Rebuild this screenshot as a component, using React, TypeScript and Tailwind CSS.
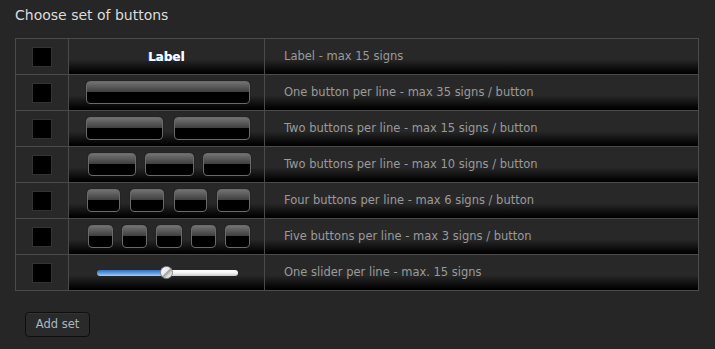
import React from "react";

const rows = [
  { kind: "label", text: "Label - max 15 signs" },
  { kind: "buttons", count: 1, text: "One button per line - max 35 signs / button" },
  { kind: "buttons", count: 2, text: "Two buttons per line - max 15 signs / button" },
  { kind: "buttons", count: 3, text: "Two buttons per line - max 10 signs / button" },
  { kind: "buttons", count: 4, text: "Four buttons per line - max 6 signs / button" },
  { kind: "buttons", count: 5, text: "Five buttons per line - max 3 signs / button" },
  { kind: "slider", text: "One slider per line - max. 15 signs" },
];

const gaps: Record<number, string> = {
  1: "gap-0 pl-[17px] pr-[14px]",
  2: "gap-[11px] pl-[17px] pr-[14px]",
  3: "gap-[9px] pl-[19px] pr-[13px]",
  4: "gap-[10px] pl-[18px] pr-[14px]",
  5: "gap-[9px] pl-[19px] pr-[14px]",
};

const GlossButton = () => (
  <div className="h-[23px] flex-1 rounded-[4px] border border-[#6a6a6a] bg-[linear-gradient(#727272,#3e3e3e_48%,#000_50%,#000)] shadow-[0_0_1px_#000]" />
);

const Slider = () => (
  <div className="relative h-[13px] w-[141px]">
    <div className="absolute left-0 top-[4px] h-[6px] w-[70px] rounded-l-full bg-[linear-gradient(#2e6fc0,#5d9be0_50%,#a8cdf2)]" />
    <div className="absolute right-0 top-[4px] h-[6px] w-[72px] rounded-r-full bg-[linear-gradient(#ffffff,#f2f2f2_50%,#c9c9c9)]" />
    <div className="absolute left-[63px] top-0 h-[13px] w-[13px] rounded-full border border-[#8a8a8a] bg-[linear-gradient(135deg,#ffffff_0%,#e8e8e8_45%,#9a9a9a_52%,#d8d8d8_70%,#f5f5f5)]" />
  </div>
);

export default function App() {
  return (
    <div
      className="min-h-[349px] w-full bg-[#262626] px-[15px] pt-[6px] text-[#999]"
      style={{ fontFamily: '"DejaVu Sans", Verdana, sans-serif' }}
    >
      <h1 className="text-[14px] leading-[18px] text-[#dcdcdc]">Choose set of buttons</h1>
      <div className="mt-[14px] w-[684px] border border-[#4a4a4a]">
        {rows.map((r, i) => (
          <div
            key={i}
            className="flex h-[36px] border-b border-[#4a4a4a] last:h-[35px] last:border-b-0"
          >
            <div className="flex w-[53px] shrink-0 items-center justify-center border-r border-[#4a4a4a] bg-[#282828]">
              <div className="h-[20px] w-[20px] border border-[#333] bg-black" />
            </div>
            <div className="flex w-[196px] shrink-0 items-center border-r border-[#4a4a4a] bg-[linear-gradient(#282828_58%,#000_97%)]">
              {r.kind === "label" && (
                <div className="w-full text-center text-[12px] font-bold text-white [text-shadow:-0.5px_0_0_#6aa0ff]">
                  Label
                </div>
              )}
              {r.kind === "buttons" && (
                <div className={`flex w-full ${gaps[r.count as number]}`}>
                  {Array.from({ length: r.count as number }).map((_, j) => (
                    <GlossButton key={j} />
                  ))}
                </div>
              )}
              {r.kind === "slider" && (
                <div className="flex w-full justify-center pl-[1px]">
                  <Slider />
                </div>
              )}
            </div>
            <div className="flex flex-1 items-center bg-[linear-gradient(#282828_58%,#000_97%)] pl-[19px] text-[11.5px] text-[#9a9a9a]">
              {r.text}
            </div>
          </div>
        ))}
      </div>
      <button className="mt-[21px] ml-[10px] h-[25px] w-[65px] rounded-[4px] border border-[#0e0e0e] bg-[#2a2a2a] text-[11.5px] text-[#a9b6c2] shadow-[inset_0_1px_0_#333]">
        Add set
      </button>
    </div>
  );
}
